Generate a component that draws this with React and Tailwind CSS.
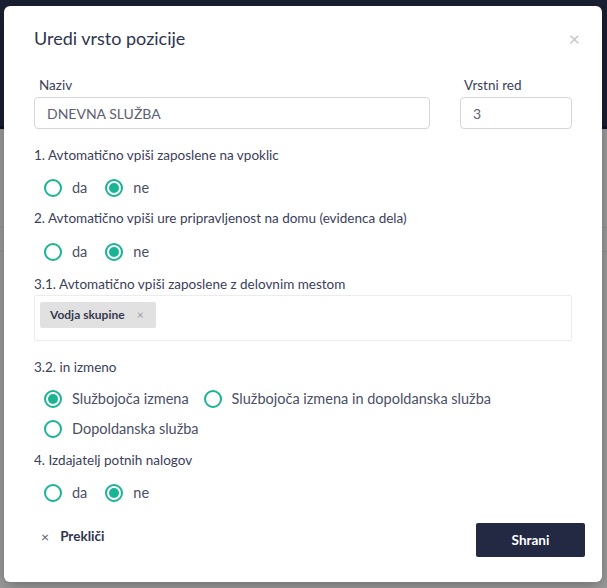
import React, { useState } from 'react';

const Radio = ({ checked, label, onClick }) => (
  <label onClick={onClick} className="flex items-center cursor-pointer">
    <span className="w-[18px] h-[18px] rounded-full border-2 border-[#1ab394] flex items-center justify-center">
      {checked && <span className="w-[10px] h-[10px] rounded-full bg-[#1ab394]"></span>}
    </span>
    <span className="ml-[10px] text-[14.5px] text-[#4a4f66]">{label}</span>
  </label>
);

const YesNo = ({ value, onChange, className }) => (
  <div className={`flex items-center gap-[18px] pl-[10px] h-[20px] ${className}`}>
    <Radio checked={value === 'da'} label="da" onClick={() => onChange('da')} />
    <Radio checked={value === 'ne'} label="ne" onClick={() => onChange('ne')} />
  </div>
);

const Label = ({ children, className = '' }) => (
  <div className={`text-[13.5px] leading-[18px] text-[#3b405a] ${className}`}>{children}</div>
);

const App = () => {
  const [vpoklic, setVpoklic] = useState('ne');
  const [ure, setUre] = useState('ne');
  const [izmena, setIzmena] = useState('sluzbujoca');
  const [nalogi, setNalogi] = useState('ne');

  return (
    <div className="relative w-[607px] h-[588px] overflow-hidden bg-[#9d9d9d]" style={{ fontFamily: 'Lato, "Noto Sans", sans-serif' }}>
      {/* page behind the overlay */}
      <div className="h-[129px] bg-[#1b1f33] border-b-[3px] border-[#111322]"></div>
      <div className="h-[99px] border-b border-[#939393]"></div>
      <div className="h-[24px] border-b border-[#939393]"></div>

      <div className="absolute left-[4px] top-[6px] w-[598px] h-[576px] bg-white rounded-[6px] shadow-[0_4px_16px_rgba(0,0,0,0.3)] flex flex-col">
        <div className="flex items-start justify-between pl-[30px] pr-[22px] pt-[20px]">
          <h2 className="text-[18px] leading-[24px] text-[#2f3450]">Uredi vrsto pozicije</h2>
          <button className="text-[#c5c7cc] text-[20px] leading-[20px] mt-[2px]">×</button>
        </div>

        <div className="px-[30px]">
          <div className="flex gap-[30px] mt-[26px]">
            <div className="flex-1">
              <Label className="pl-[5px] mb-[3px]">Naziv</Label>
              <input
                defaultValue="DNEVNA SLUŽBA"
                className="w-full h-[32px] border border-[#d5d6da] rounded-[4px] px-[12px] text-[14px] text-[#5c6072] outline-none"
              />
            </div>
            <div className="w-[112px]">
              <Label className="pl-[4px] mb-[3px]">Vrstni red</Label>
              <input
                defaultValue="3"
                className="w-full h-[32px] border border-[#d5d6da] rounded-[4px] px-[12px] text-[14px] text-[#5c6072] outline-none"
              />
            </div>
          </div>

          <Label className="mt-[17px]">1. Avtomatično vpiši zaposlene na vpoklic</Label>
          <YesNo value={vpoklic} onChange={setVpoklic} className="mt-[14px]" />

          <Label className="mt-[11px]">2. Avtomatično vpiši ure pripravljenost na domu (evidenca dela)</Label>
          <YesNo value={ure} onChange={setUre} className="mt-[15px]" />

          <Label className="mt-[13px]">3.1. Avtomatično vpiši zaposlene z delovnim mestom</Label>
          <div className="mt-[2px] h-[46px] border border-[#ececee] rounded-[2px] px-[5px] pt-[5px]">
            <span className="inline-flex items-center h-[26px] bg-[#e1e1e1] rounded-[2px] pl-[10px] pr-[12px] text-[12px] font-bold text-[#353a50]">
              Vodja skupine
              <span className="ml-[12px] text-[#9a9ba3] text-[12px] font-normal">×</span>
            </span>
          </div>

          <Label className="mt-[17px]">3.2. in izmeno</Label>
          <div className="flex items-center pl-[10px] mt-[13px] gap-[15px] h-[20px]">
            <Radio checked={izmena === 'sluzbujoca'} label="Službojoča izmena" onClick={() => setIzmena('sluzbujoca')} />
            <Radio checked={izmena === 'oboje'} label="Službojoča izmena in dopoldanska služba" onClick={() => setIzmena('oboje')} />
          </div>
          <div className="flex items-center pl-[10px] mt-[10px] h-[20px]">
            <Radio checked={izmena === 'dopoldanska'} label="Dopoldanska služba" onClick={() => setIzmena('dopoldanska')} />
          </div>

          <Label className="mt-[12px]">4. Izdajatelj potnih nalogov</Label>
          <YesNo value={nalogi} onChange={setNalogi} className="mt-[14px]" />
        </div>

        <div className="mt-auto flex items-center justify-between pl-[37px] pr-[17px] pb-[25px]">
          <button className="flex items-center text-[13.5px] text-[#2f3450] mb-[8px]">
            <span className="text-[#555a6c] text-[14px] mr-[11px]">×</span>
            <span className="font-bold">Prekliči</span>
          </button>
          <button className="w-[109px] h-[34px] bg-[#232843] rounded-[2px] text-white text-[13.5px] font-bold">
            Shrani
          </button>
        </div>
      </div>
    </div>
  );
};

export default App;
